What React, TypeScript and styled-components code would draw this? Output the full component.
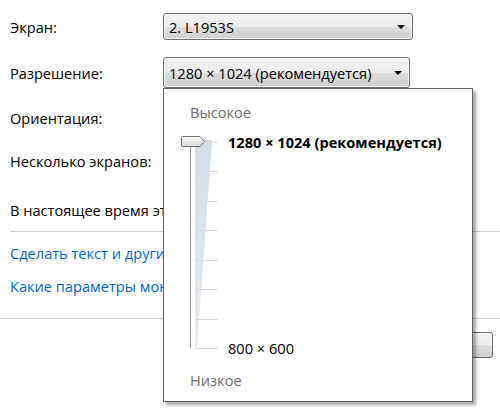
import React from 'react';
import styled, { createGlobalStyle } from 'styled-components';

const GlobalStyle = createGlobalStyle`
  html, body {
    margin: 0;
    padding: 0;
    background: #ffffff;
  }
`;

const Page = styled.div`
  position: relative;
  width: 500px;
  height: 414px;
  overflow: hidden;
  background: #ffffff;
  font-family: 'Open Sans', 'Noto Sans', sans-serif;
  font-size: 14.6px;
  color: #000000;
`;

const Form = styled.div`
  display: flex;
  flex-direction: column;
  padding-top: 13px;
`;

const Row = styled.div<{ $h: number; $mt: number }>`
  display: grid;
  grid-template-columns: 153px 1fr;
  align-items: center;
  height: ${p => p.$h}px;
  margin-top: ${p => p.$mt}px;
  padding-left: 10px;
  white-space: nowrap;
`;

const Label = styled.span`
  line-height: 18px;
`;

const Combo = styled.div<{ $w: number }>`
  position: relative;
  box-sizing: border-box;
  width: ${p => p.$w}px;
  height: 100%;
  display: flex;
  align-items: center;
  padding-left: 5px;
  border: 1px solid #707070;
  border-radius: 3px;
  background: linear-gradient(#f2f2f2 0%, #ebebeb 50%, #dddddd 51%, #cfcfcf 100%);
  box-shadow: inset 0 0 0 1px rgba(255, 255, 255, 0.7);

  &::after {
    content: '';
    position: absolute;
    right: 7px;
    top: 50%;
    margin-top: -2px;
    border-left: 4px solid transparent;
    border-right: 4px solid transparent;
    border-top: 4px solid #000000;
  }
`;

const Divider = styled.div<{ $mt: number; $inset: number }>`
  height: 1px;
  margin-top: ${p => p.$mt}px;
  margin-left: ${p => p.$inset}px;
  background: #d0d0d0;
`;

const Link = styled.a<{ $mt: number }>`
  display: block;
  height: 20px;
  line-height: 20px;
  margin-top: ${p => p.$mt}px;
  padding-left: 10px;
  color: #0066cc;
  text-decoration: none;
  white-space: nowrap;
`;

const Footer = styled.div`
  display: flex;
  justify-content: flex-end;
  margin-top: 13px;
  padding-right: 7px;
`;

const Button = styled.button`
  box-sizing: border-box;
  width: 180px;
  height: 26px;
  border: 1px solid #707070;
  border-radius: 3px;
  background: linear-gradient(#f2f2f2 0%, #ebebeb 50%, #dddddd 51%, #cfcfcf 100%);
`;

const Popup = styled.div`
  position: absolute;
  left: 163px;
  top: 88px;
  box-sizing: border-box;
  width: 310px;
  height: 314px;
  display: flex;
  flex-direction: column;
  background: #ffffff;
  border: 1px solid #646464;
  box-shadow: 3px 3px 3px rgba(0, 0, 0, 0.35);
`;

const Caption = styled.div<{ $mt: number }>`
  height: 20px;
  line-height: 20px;
  margin-top: ${p => p.$mt}px;
  padding-left: 26px;
  color: #6d6d6d;
`;

const SliderRow = styled.div`
  display: flex;
  margin-top: 12px;
  padding-left: 14px;
`;

const Values = styled.div`
  display: flex;
  flex-direction: column;
  justify-content: space-between;
  margin-left: 4px;
  height: 222px;
`;

const Value = styled.span<{ $bold?: boolean }>`
  height: 16px;
  line-height: 16px;
  font-weight: ${p => (p.$bold ? 700 : 400)};
  white-space: nowrap;
`;

const ticks = [8, 37, 67, 96, 126, 155, 185, 214];

const Slider: React.FC = () => (
  <svg width="46" height="222" viewBox="0 0 46 222">
    <defs>
      <linearGradient id="wedge" x1="0" y1="0" x2="0" y2="1">
        <stop offset="0" stopColor="#d3dce5" />
        <stop offset="1" stopColor="#e6ecf1" />
      </linearGradient>
      <linearGradient id="thumb" x1="0" y1="0" x2="0" y2="1">
        <stop offset="0" stopColor="#fbfbfb" />
        <stop offset="0.5" stopColor="#ececec" />
        <stop offset="1" stopColor="#d4d4d4" />
      </linearGradient>
    </defs>
    <polygon points="17,6 34,6 19,214 17,214" fill="url(#wedge)" />
    {ticks.map(y => (
      <line key={y} x1="17" x2="40" y1={y + 0.5} y2={y + 0.5} stroke="#d3dce5" strokeWidth="1" />
    ))}
    <line x1="12.5" x2="12.5" y1="12" y2="214" stroke="#9a9a9a" strokeWidth="1" />
    <path
      d="M4.5,2.5 H22 L26.5,7.5 L22,12.5 H4.5 Q3.5,12.5 3.5,11.5 V3.5 Q3.5,2.5 4.5,2.5 Z"
      fill="url(#thumb)"
      stroke="#6f6f6f"
      strokeWidth="1"
    />
  </svg>
);

const App: React.FC = () => (
  <Page>
    <GlobalStyle />
    <Form>
      <Row $h={27} $mt={0}>
        <Label>Экран:</Label>
        <Combo $w={250}>2. L1953S</Combo>
      </Row>
      <Row $h={31} $mt={17}>
        <Label>Разрешение:</Label>
        <Combo $w={247}>1280 × 1024 (рекомендуется)</Combo>
      </Row>
      <Row $h={28} $mt={16}>
        <Label>Ориентация:</Label>
      </Row>
      <Row $h={28} $mt={15}>
        <Label>Несколько экранов:</Label>
      </Row>
      <Row $h={28} $mt={21}>
        <Label>В настоящее время это основной монитор.</Label>
      </Row>
      <Divider $mt={7} $inset={10} />
      <Link $mt={11}>Сделать текст и другие элементы больше или меньше</Link>
      <Link $mt={13}>Какие параметры монитора следует выбрать?</Link>
      <Divider $mt={22} $inset={0} />
      <Footer>
        <Button aria-label="Дополнительные параметры" />
      </Footer>
    </Form>

    <Popup>
      <Caption $mt={13}>Высокое</Caption>
      <SliderRow>
        <Slider />
        <Values>
          <Value $bold>1280 × 1024 (рекомендуется)</Value>
          <Value>800 × 600</Value>
        </Values>
      </SliderRow>
      <Caption $mt={14}>Низкое</Caption>
    </Popup>
  </Page>
);

export default App;
